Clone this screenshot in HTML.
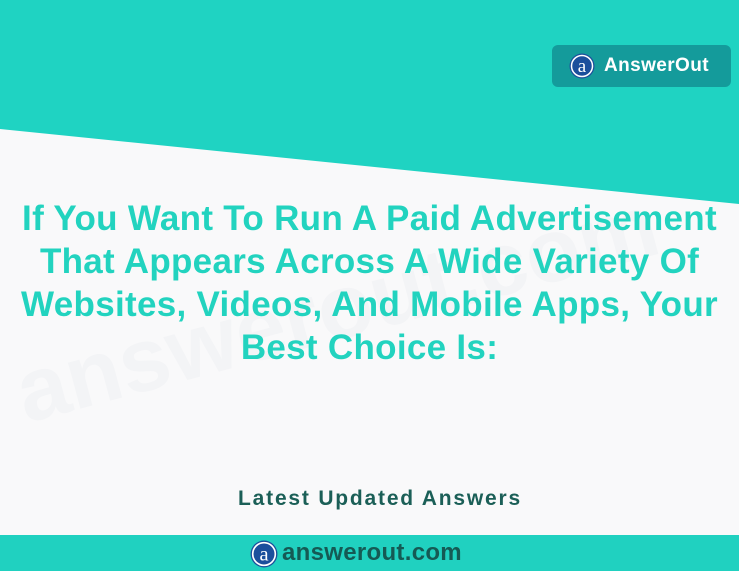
<!DOCTYPE html>
<html><head><meta charset="utf-8">
<style>
html,body{margin:0;padding:0}
body{width:739px;height:571px;position:relative;overflow:hidden;background:#f9f9fa;font-family:"Liberation Sans",sans-serif}
.top{position:absolute;left:0;top:0;width:739px;height:210px}
.btn{position:absolute;left:552px;top:45px;width:179px;height:42px;background:#149b9b;border-radius:6px}
.btn svg{position:absolute;left:17px;top:8px}
.btn span{position:absolute;left:52px;top:10px;color:#fff;font-weight:bold;font-size:19px;letter-spacing:0.4px}
.wm{position:absolute;left:5px;top:345px;font-size:90px;font-weight:bold;color:#f3f4f6;transform:rotate(-15deg);transform-origin:left top;white-space:nowrap}
.h{position:absolute;left:0;top:197px;width:739px;text-align:center;color:#22d3bf;font-weight:bold;font-size:35px;line-height:43px;letter-spacing:0.3px}
.lat{position:absolute;left:0;top:487px;width:760px;text-align:center;color:#1b5f57;font-weight:bold;font-size:21px;letter-spacing:1.8px}
.bot{position:absolute;left:0;top:535px;width:739px;height:36px;background:#20d1c0}
.bot svg{position:absolute;left:250px;top:5px}
.bot span{position:absolute;left:282px;top:4px;color:#155a54;font-weight:bold;font-size:24px;letter-spacing:0.3px}
</style></head><body>
<div class="wm">answerout.com</div>
<svg class="top" width="739" height="210"><polygon points="0,0 739,0 739,204 0,129" fill="#1fd3c2"/></svg>
<div class="btn"><svg width="26" height="26" viewBox="0 0 26 26"><circle cx="13" cy="13" r="12.5" fill="#1b4f9c"/><circle cx="13" cy="13" r="10.5" fill="none" stroke="#fff" stroke-width="1.5"/><text x="13" y="19" text-anchor="middle" font-family="Liberation Serif,serif" font-size="19" fill="#fff">a</text></svg><span>AnswerOut</span></div>
<div class="h">If You Want To Run A Paid Advertisement<br>That Appears Across A Wide Variety Of<br>Websites, Videos, And Mobile Apps, Your<br>Best Choice Is:</div>
<div class="lat">Latest Updated Answers</div>
<div class="bot"><svg width="28" height="28" viewBox="0 0 26 26"><circle cx="13" cy="13" r="12.5" fill="#1b4f9c"/><circle cx="13" cy="13" r="10.5" fill="none" stroke="#fff" stroke-width="1.5"/><text x="13" y="19" text-anchor="middle" font-family="Liberation Serif,serif" font-size="19" fill="#fff">a</text></svg><span>answerout.com</span></div>
</body></html>
